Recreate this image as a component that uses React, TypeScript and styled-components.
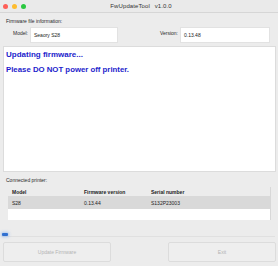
import React from 'react'
import styled, { createGlobalStyle } from 'styled-components'

const GlobalStyle = createGlobalStyle`
  html, body {
    margin: 0;
    padding: 0;
    background: #ececec;
    font-family: "Liberation Sans", Arial, sans-serif;
  }
`

const Window = styled.div`
  width: 278px;
  height: 266px;
  display: flex;
  flex-direction: column;
  background: #ececec;
  overflow: hidden;
`

const TitleBar = styled.div`
  height: 12px;
  display: flex;
  align-items: center;
  background: #eaeaea;
  border-bottom: 1px solid #d6d6d6;
`

const Lights = styled.div`
  display: flex;
  gap: 4px;
  padding-left: 3px;
`

const Light = styled.span<{ $c: string }>`
  width: 5px;
  height: 5px;
  border-radius: 50%;
  background: ${p => p.$c};
`

const Title = styled.div`
  flex: 1;
  text-align: center;
  font-size: 6px;
  color: #333;
  margin-left: -22px;
  letter-spacing: 0.1px;
  word-spacing: 3px;
`

const SectionLabel = styled.div<{ $top: number }>`
  font-size: 5px;
  color: #2a2a2a;
  padding-left: 6px;
  margin-top: ${p => p.$top}px;
`

const FileRow = styled.div`
  display: flex;
  align-items: center;
  height: 16px;
  margin-top: 3px;
  padding: 0 8px 0 10px;
`

const FieldLabel = styled.span<{ $w: number }>`
  width: ${p => p.$w}px;
  font-size: 5px;
  color: #2a2a2a;
  text-align: right;
  padding-right: 2px;
  align-self: flex-start;
  margin-top: 3px;
`

const Input = styled.div<{ $w: number }>`
  width: ${p => p.$w}px;
  height: 16px;
  box-sizing: border-box;
  background: #fff;
  border: 1px solid #e2e2e2;
  font-size: 5px;
  color: #222;
  display: flex;
  align-items: center;
  padding-left: 3px;
`

const Spacer = styled.div`
  flex: 1;
`

const Log = styled.div`
  margin: 3px 2px 0 3px;
  height: 126px;
  background: #fff;
  border: 1px solid #dcdcdc;
  box-sizing: border-box;
  padding: 3px 2px;
  color: #1d1dcc;
  font-weight: bold;
`

const LogLine = styled.div<{ $size: number; $top: number }>`
  font-size: ${p => p.$size}px;
  line-height: 9px;
  margin-top: ${p => p.$top}px;
`

const Table = styled.div`
  margin: 4px 7px 0 8px;
  display: flex;
  flex-direction: column;
`

const Row = styled.div<{ $bg: string; $h: number; $bold?: boolean }>`
  display: grid;
  grid-template-columns: 72px 67px 1fr;
  height: ${p => p.$h}px;
  align-items: center;
  background: ${p => p.$bg};
  font-size: 5px;
  font-weight: ${p => (p.$bold ? 'bold' : 'normal')};
  color: #222;
  border-right: 1px solid #d8d8d8;
  span {
    padding-left: 4px;
  }
`

const Progress = styled.div`
  margin: 13px 3px 0 2px;
  height: 3px;
  position: relative;
  border-bottom: 1px solid #e0e0e0;
`

const Chunk = styled.div`
  position: absolute;
  left: 0;
  top: 0;
  height: 3px;
  border-radius: 1px;
  background: #2f6fd0;
  box-shadow: 0 0 3px 1px rgba(120, 170, 240, 0.6);
`

const Buttons = styled.div`
  display: flex;
  justify-content: space-between;
  padding: 5px 2px 0 3px;
`

const Button = styled.div`
  width: 108px;
  height: 20px;
  box-sizing: border-box;
  border: 1px solid #dcdcdc;
  border-radius: 2px;
  background: #eeeeee;
  color: #b4b4b4;
  font-size: 5px;
  display: flex;
  align-items: center;
  justify-content: center;
`

const progress = 6

const App = () => {
  return (
    <Window>
      <GlobalStyle />
      <TitleBar>
        <Lights>
          <Light $c="#fe5f57" />
          <Light $c="#febc2e" />
          <Light $c="#2ac840" />
        </Lights>
        <Title>FwUpdateTool v1.0.0</Title>
      </TitleBar>
      <SectionLabel $top={5}>Firmware file information:</SectionLabel>
      <FileRow>
        <FieldLabel $w={18}>Model:</FieldLabel>
        <Input $w={88}>Seaory S28</Input>
        <Spacer />
        <FieldLabel $w={22}>Version:</FieldLabel>
        <Input $w={90}>0.13.48</Input>
      </FileRow>
      <Log>
        <LogLine $size={8} $top={0}>Updating firmware...</LogLine>
        <LogLine $size={7.8} $top={6}>Please DO NOT power off printer.</LogLine>
      </Log>
      <SectionLabel $top={5}>Connected printer:</SectionLabel>
      <Table>
        <Row $bg="#ececec" $h={9} $bold>
          <span>Model</span>
          <span>Firmware version</span>
          <span>Serial number</span>
        </Row>
        <Row $bg="#d9d9d9" $h={13}>
          <span>S28</span>
          <span>0.13.44</span>
          <span>S132P23003</span>
        </Row>
        <Row $bg="#ffffff" $h={11}>
          <span />
          <span />
          <span />
        </Row>
      </Table>
      <Progress>
        <Chunk style={{ width: progress }} />
      </Progress>
      <Buttons>
        <Button>Update Firmware</Button>
        <Button>Exit</Button>
      </Buttons>
    </Window>
  )
}

export default App
